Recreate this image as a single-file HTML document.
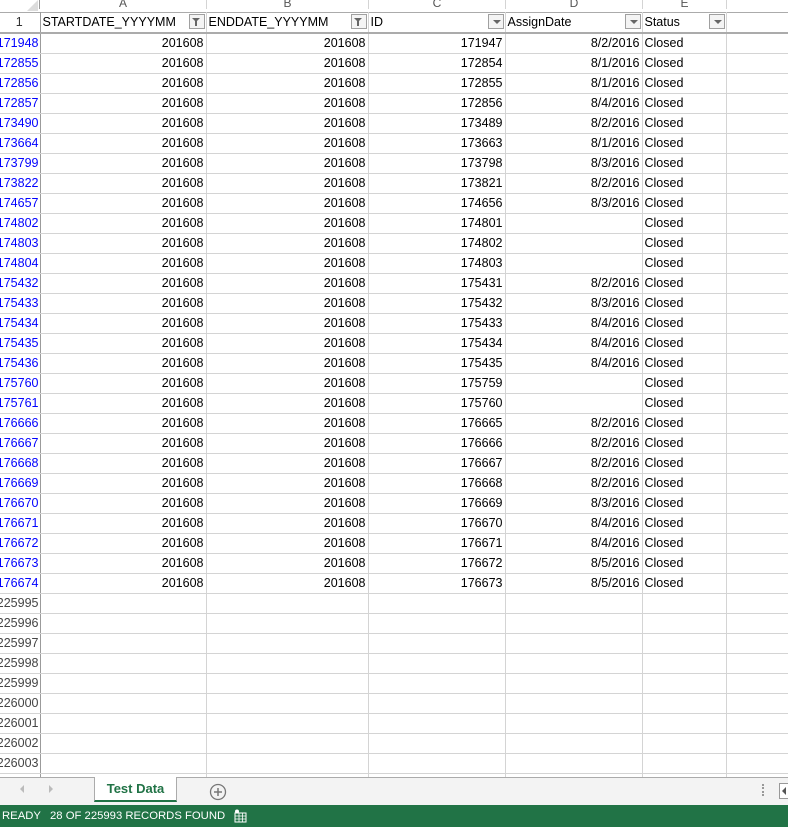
<!DOCTYPE html>
<html><head><meta charset="utf-8"><style>
*{margin:0;padding:0;box-sizing:border-box}
body{width:788px;height:827px;overflow:hidden;background:#fff;font-family:"Liberation Sans",Arial,sans-serif;font-size:12.5px;color:#000;position:relative}
.colh{position:absolute;top:0;left:0;width:788px;height:13px;border-bottom:1px solid #ababab;background:#fff}
.colh div{position:absolute;top:-4px;height:13px;text-align:center;color:#555;font-size:12px;border-right:1px solid #d4d4d4}
.corner{position:absolute;left:27px;top:0;width:0;height:0;border-left:11px solid transparent;border-bottom:11px solid #dcdcdc}
table{position:absolute;top:12px;left:0;border-collapse:collapse;table-layout:fixed;width:788px}
td{height:20px;border-right:1px solid #d4d4d4;border-bottom:1px solid #d4d4d4;white-space:nowrap;overflow:hidden;padding:0 2px;line-height:18px;text-align:right}
td:last-child{border-right:none}
td.rh{text-align:right;color:#0000ff;padding:0 1px 0 0;border-right:1px solid #9b9b9b;overflow:hidden;direction:rtl}
td.rh.g{color:#444}
td.l{text-align:left}
tr.h td{border-bottom:2px solid #ababab;text-align:left;position:relative;height:21px}
tr.h td.rh{text-align:center;color:#333;direction:ltr}
.fb{position:absolute;right:1px;top:2px;width:16px;height:15px;border:1px solid #a0a0a0;background:#f4f4f4}
.fb:after{content:"";position:absolute;left:4px;top:5px;border-left:4px solid transparent;border-right:4px solid transparent;border-top:4px solid #666}
.fb.f:after{left:2px;top:3px;border-left:4px solid transparent;border-right:4px solid transparent;border-top:4px solid #666}
.fb.f:before{content:"";position:absolute;left:5px;top:6px;width:2px;height:5px;background:#666}
.tabs{position:absolute;top:777px;left:0;width:788px;height:28px;background:#f3f3f3;border-top:1px solid #ababab}
.tab{position:absolute;left:94px;top:-1px;width:83px;height:25px;background:#fff;border:1px solid #ababab;border-top:none;border-bottom:2px solid #217346;color:#217346;font-weight:bold;font-size:13px;text-align:center;line-height:24px}
.status{position:absolute;top:805px;left:0;width:788px;height:22px;background:#217346;color:#fff;font-size:11.3px;line-height:22px}
</style></head><body>
<div class="colh">
<div style="left:0;width:40px;border-right:1px solid #9b9b9b"></div>
<div style="left:40px;width:167px">A</div>
<div style="left:207px;width:162px">B</div>
<div style="left:369px;width:137px">C</div>
<div style="left:506px;width:137px">D</div>
<div style="left:643px;width:84px">E</div>
</div>
<div class="corner"></div>
<table>
<colgroup><col style="width:40px"><col style="width:166px"><col style="width:162px"><col style="width:137px"><col style="width:137px"><col style="width:84px"><col></colgroup>
<tr class="h"><td class="rh">1</td><td>STARTDATE_YYYYMM<span class="fb f"></span></td><td>ENDDATE_YYYYMM<span class="fb f"></span></td><td>ID<span class="fb"></span></td><td>AssignDate<span class="fb"></span></td><td>Status<span class="fb"></span></td><td></td></tr>
<tr><td class="rh">171948</td><td>201608</td><td>201608</td><td>171947</td><td>8/2/2016</td><td class="l">Closed</td><td></td></tr>
<tr><td class="rh">172855</td><td>201608</td><td>201608</td><td>172854</td><td>8/1/2016</td><td class="l">Closed</td><td></td></tr>
<tr><td class="rh">172856</td><td>201608</td><td>201608</td><td>172855</td><td>8/1/2016</td><td class="l">Closed</td><td></td></tr>
<tr><td class="rh">172857</td><td>201608</td><td>201608</td><td>172856</td><td>8/4/2016</td><td class="l">Closed</td><td></td></tr>
<tr><td class="rh">173490</td><td>201608</td><td>201608</td><td>173489</td><td>8/2/2016</td><td class="l">Closed</td><td></td></tr>
<tr><td class="rh">173664</td><td>201608</td><td>201608</td><td>173663</td><td>8/1/2016</td><td class="l">Closed</td><td></td></tr>
<tr><td class="rh">173799</td><td>201608</td><td>201608</td><td>173798</td><td>8/3/2016</td><td class="l">Closed</td><td></td></tr>
<tr><td class="rh">173822</td><td>201608</td><td>201608</td><td>173821</td><td>8/2/2016</td><td class="l">Closed</td><td></td></tr>
<tr><td class="rh">174657</td><td>201608</td><td>201608</td><td>174656</td><td>8/3/2016</td><td class="l">Closed</td><td></td></tr>
<tr><td class="rh">174802</td><td>201608</td><td>201608</td><td>174801</td><td></td><td class="l">Closed</td><td></td></tr>
<tr><td class="rh">174803</td><td>201608</td><td>201608</td><td>174802</td><td></td><td class="l">Closed</td><td></td></tr>
<tr><td class="rh">174804</td><td>201608</td><td>201608</td><td>174803</td><td></td><td class="l">Closed</td><td></td></tr>
<tr><td class="rh">175432</td><td>201608</td><td>201608</td><td>175431</td><td>8/2/2016</td><td class="l">Closed</td><td></td></tr>
<tr><td class="rh">175433</td><td>201608</td><td>201608</td><td>175432</td><td>8/3/2016</td><td class="l">Closed</td><td></td></tr>
<tr><td class="rh">175434</td><td>201608</td><td>201608</td><td>175433</td><td>8/4/2016</td><td class="l">Closed</td><td></td></tr>
<tr><td class="rh">175435</td><td>201608</td><td>201608</td><td>175434</td><td>8/4/2016</td><td class="l">Closed</td><td></td></tr>
<tr><td class="rh">175436</td><td>201608</td><td>201608</td><td>175435</td><td>8/4/2016</td><td class="l">Closed</td><td></td></tr>
<tr><td class="rh">175760</td><td>201608</td><td>201608</td><td>175759</td><td></td><td class="l">Closed</td><td></td></tr>
<tr><td class="rh">175761</td><td>201608</td><td>201608</td><td>175760</td><td></td><td class="l">Closed</td><td></td></tr>
<tr><td class="rh">176666</td><td>201608</td><td>201608</td><td>176665</td><td>8/2/2016</td><td class="l">Closed</td><td></td></tr>
<tr><td class="rh">176667</td><td>201608</td><td>201608</td><td>176666</td><td>8/2/2016</td><td class="l">Closed</td><td></td></tr>
<tr><td class="rh">176668</td><td>201608</td><td>201608</td><td>176667</td><td>8/2/2016</td><td class="l">Closed</td><td></td></tr>
<tr><td class="rh">176669</td><td>201608</td><td>201608</td><td>176668</td><td>8/2/2016</td><td class="l">Closed</td><td></td></tr>
<tr><td class="rh">176670</td><td>201608</td><td>201608</td><td>176669</td><td>8/3/2016</td><td class="l">Closed</td><td></td></tr>
<tr><td class="rh">176671</td><td>201608</td><td>201608</td><td>176670</td><td>8/4/2016</td><td class="l">Closed</td><td></td></tr>
<tr><td class="rh">176672</td><td>201608</td><td>201608</td><td>176671</td><td>8/4/2016</td><td class="l">Closed</td><td></td></tr>
<tr><td class="rh">176673</td><td>201608</td><td>201608</td><td>176672</td><td>8/5/2016</td><td class="l">Closed</td><td></td></tr>
<tr><td class="rh">176674</td><td>201608</td><td>201608</td><td>176673</td><td>8/5/2016</td><td class="l">Closed</td><td></td></tr>
<tr><td class="rh g">225995</td><td></td><td></td><td></td><td></td><td></td><td></td></tr>
<tr><td class="rh g">225996</td><td></td><td></td><td></td><td></td><td></td><td></td></tr>
<tr><td class="rh g">225997</td><td></td><td></td><td></td><td></td><td></td><td></td></tr>
<tr><td class="rh g">225998</td><td></td><td></td><td></td><td></td><td></td><td></td></tr>
<tr><td class="rh g">225999</td><td></td><td></td><td></td><td></td><td></td><td></td></tr>
<tr><td class="rh g">226000</td><td></td><td></td><td></td><td></td><td></td><td></td></tr>
<tr><td class="rh g">226001</td><td></td><td></td><td></td><td></td><td></td><td></td></tr>
<tr><td class="rh g">226002</td><td></td><td></td><td></td><td></td><td></td><td></td></tr>
<tr><td class="rh g">226003</td><td></td><td></td><td></td><td></td><td></td><td></td></tr>
<tr><td class="rh g">226004</td><td></td><td></td><td></td><td></td><td></td><td></td></tr>
</table>
<div class="tabs">
<span style="position:absolute;left:20px;top:7px;border-top:4px solid transparent;border-bottom:4px solid transparent;border-right:4px solid #bbb"></span>
<span style="position:absolute;left:49px;top:7px;border-top:4px solid transparent;border-bottom:4px solid transparent;border-left:4px solid #bbb"></span>
<div class="tab">Test Data</div>
<svg style="position:absolute;left:209px;top:5px" width="18" height="18" viewBox="0 0 18 18"><circle cx="9" cy="9" r="7.5" fill="none" stroke="#777" stroke-width="1.3"/><path d="M9 5v8M5 9h8" stroke="#777" stroke-width="1.5"/></svg>
<span style="position:absolute;left:762px;top:6px;width:2px;height:12px;border-left:2px dotted #999"></span>
<span style="position:absolute;left:779px;top:5px;width:12px;height:16px;border:1px solid #999;background:#fff"></span>
<span style="position:absolute;left:782px;top:9px;border-top:4px solid transparent;border-bottom:4px solid transparent;border-right:4px solid #555"></span>
</div>
<div class="status"><span style="position:absolute;left:2px">READY</span><span style="position:absolute;left:50px">28 OF 225993 RECORDS FOUND</span>
<svg style="position:absolute;left:234px;top:4px" width="13" height="14" viewBox="0 0 13 14"><rect x="1" y="4" width="11" height="9" fill="none" stroke="#fff"/><path d="M1 7h11M1 10h11M5 4v9M8.5 4v9" stroke="#fff" stroke-width="0.8"/><circle cx="3" cy="2.5" r="2" fill="#fff"/></svg>
</div>
</body></html>
